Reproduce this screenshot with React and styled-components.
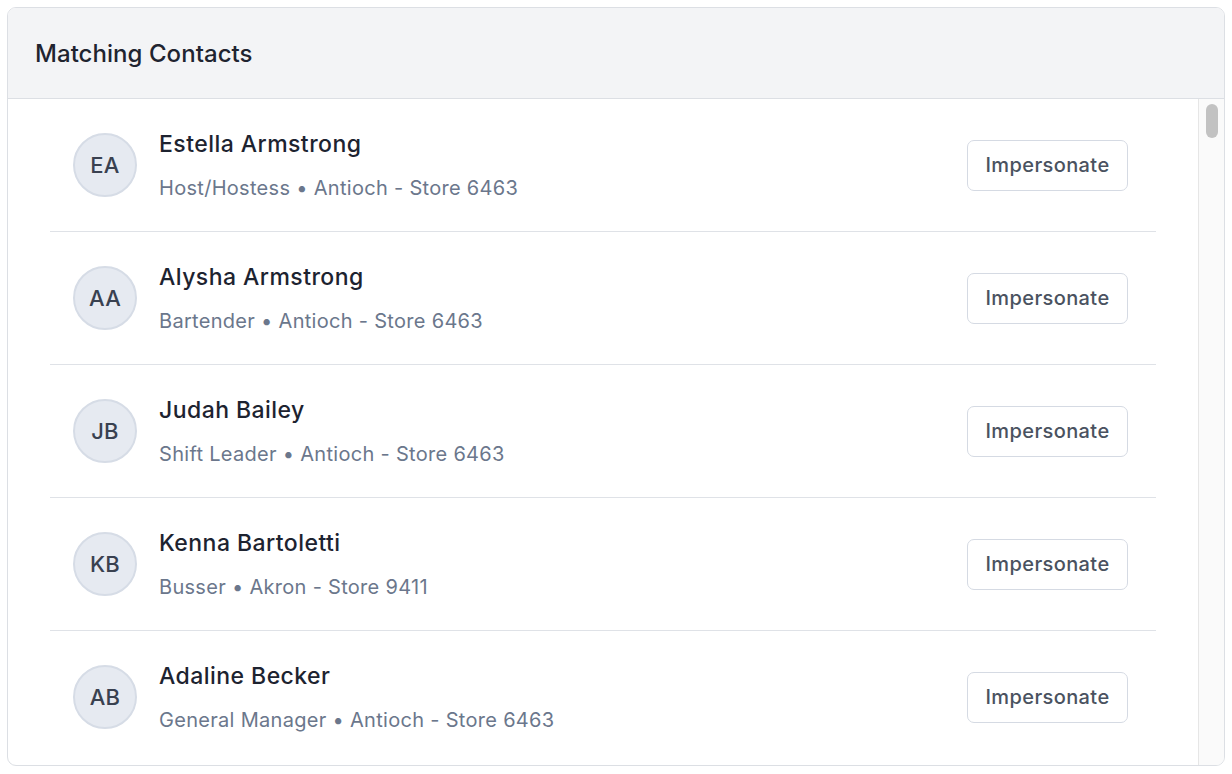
import styled, { createGlobalStyle } from "styled-components";

const GlobalStyle = createGlobalStyle`
  html, body {
    margin: 0;
    padding: 0;
    background: #ffffff;
  }
  body {
    font-family: Inter, "Noto Sans", "Liberation Sans", sans-serif;
    -webkit-font-smoothing: antialiased;
  }
`;

const Page = styled.div`
  padding: 7px;
  width: 1232px;
  height: 774px;
  box-sizing: border-box;
`;

const Card = styled.section`
  height: 759px;
  border: 1px solid #dcdfe4;
  border-radius: 9px;
  overflow: hidden;
  display: flex;
  flex-direction: column;
  background: #fff;
  box-sizing: border-box;
`;

const Header = styled.header`
  height: 91px;
  flex: none;
  display: flex;
  align-items: center;
  padding: 0 27px;
  background: #f3f4f6;
  border-bottom: 1px solid #dcdfe4;
  box-sizing: border-box;
`;

const Title = styled.h2`
  margin: 0;
  font-size: 24px;
  font-weight: 500;
  color: #1f2430;
  letter-spacing: 0.05px;
`;

const Body = styled.div`
  flex: 1;
  display: flex;
  min-height: 0;
`;

const List = styled.ul`
  flex: 1;
  margin: 0;
  padding: 0 42px;
  list-style: none;
`;

// looks like the native scrollbar in the screenshot
const ScrollTrack = styled.div`
  width: 26px;
  flex: none;
  box-sizing: border-box;
  padding: 5px 6px 0 7px;
  background: #fafafa;
  border-left: 1px solid #e6e6e6;
`;

const ScrollThumb = styled.div`
  height: 34px;
  border-radius: 7px;
  background: #c2c2c2;
`;

const Row = styled.li`
  height: 133px;
  display: flex;
  align-items: center;
  gap: 22px;
  padding: 0 28px 0 23px;
  border-bottom: 1px solid #dfe2e7;
  box-sizing: border-box;

  &:last-child {
    border-bottom: none;
    height: 132px;
  }
`;

const Avatar = styled.div`
  width: 64px;
  height: 64px;
  flex: none;
  border-radius: 50%;
  background: #e6eaf1;
  border: 2px solid #d6dce6;
  box-sizing: border-box;
  display: flex;
  align-items: center;
  justify-content: center;
  font-size: 22px;
  font-weight: 500;
  color: #394150;
  letter-spacing: 0.3px;
`;

const Info = styled.div`
  flex: 1;
  display: flex;
  flex-direction: column;
  gap: 18px;
  margin-top: -1px;
`;

const Name = styled.div`
  font-size: 23px;
  line-height: 28px;
  font-weight: 500;
  color: #1d2330;
  letter-spacing: 0.45px;
`;

const Meta = styled.div`
  font-size: 20px;
  line-height: 24px;
  color: #6b778c;
  letter-spacing: 0.3px;
`;

const Button = styled.button`
  width: 161px;
  height: 51px;
  flex: none;
  border: 1.5px solid #d5dae3;
  border-radius: 7px;
  background: #fff;
  font-family: inherit;
  font-size: 20px;
  font-weight: 500;
  color: #4a5260;
  letter-spacing: 0.4px;
  cursor: pointer;
`;

const contacts = [
  ["Estella Armstrong", "Host/Hostess", "Antioch - Store 6463"],
  ["Alysha Armstrong", "Bartender", "Antioch - Store 6463"],
  ["Judah Bailey", "Shift Leader", "Antioch - Store 6463"],
  ["Kenna Bartoletti", "Busser", "Akron - Store 9411"],
  ["Adaline Becker", "General Manager", "Antioch - Store 6463"],
];

const initials = (name) =>
  name
    .split(" ")
    .map((p) => p[0])
    .join("");

const App = () => {
  return (
    <Page>
      <GlobalStyle />
      <Card>
        <Header>
          <Title>Matching Contacts</Title>
        </Header>
        <Body>
          <List>
            {contacts.map(([name, role, store]) => (
              <Row key={name}>
                <Avatar>{initials(name)}</Avatar>
                <Info>
                  <Name>{name}</Name>
                  <Meta>
                    {role} • {store}
                  </Meta>
                </Info>
                <Button>Impersonate</Button>
              </Row>
            ))}
          </List>
          <ScrollTrack>
            <ScrollThumb />
          </ScrollTrack>
        </Body>
      </Card>
    </Page>
  );
};

export default App;
